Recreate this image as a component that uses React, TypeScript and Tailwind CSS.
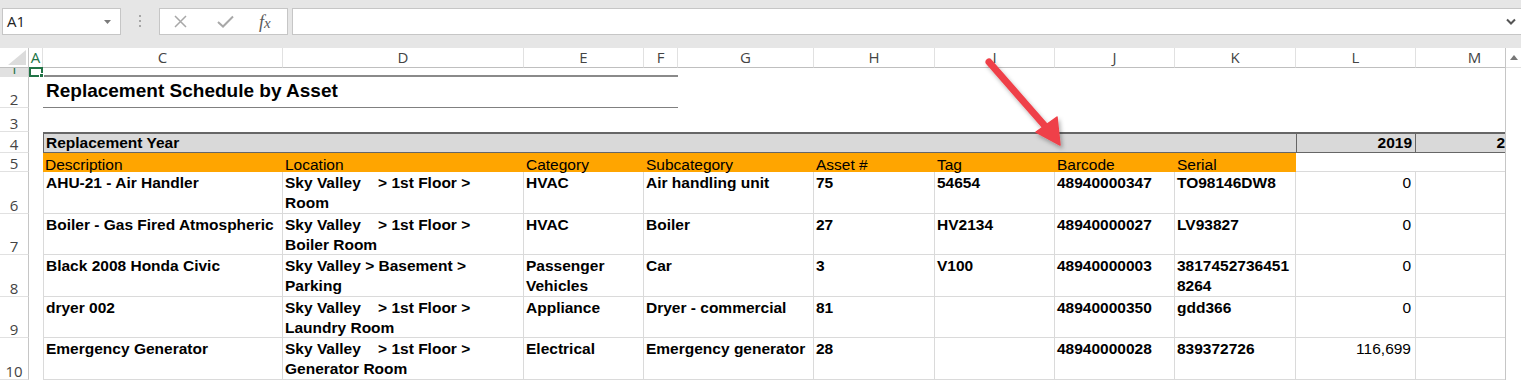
import React from "react";

type Row = {
  n: number;
  desc: string;
  loc: string[];
  cat: string[];
  sub: string;
  asset: string;
  tag: string;
  bar: string;
  serial: string[];
  l: string;
};

const rows: Row[] = [
  { n: 6, desc: "AHU-21 - Air Handler", loc: ["Sky Valley    > 1st Floor >", "Room"], cat: ["HVAC"], sub: "Air handling unit", asset: "75", tag: "54654", bar: "48940000347", serial: ["TO98146DW8"], l: "0" },
  { n: 7, desc: "Boiler - Gas Fired Atmospheric", loc: ["Sky Valley    > 1st Floor >", "Boiler Room"], cat: ["HVAC"], sub: "Boiler", asset: "27", tag: "HV2134", bar: "48940000027", serial: ["LV93827"], l: "0" },
  { n: 8, desc: "Black 2008 Honda Civic", loc: ["Sky Valley > Basement >", "Parking"], cat: ["Passenger", "Vehicles"], sub: "Car", asset: "3", tag: "V100", bar: "48940000003", serial: ["3817452736451", "8264"], l: "0" },
  { n: 9, desc: "dryer 002", loc: ["Sky Valley    > 1st Floor >", "Laundry Room"], cat: ["Appliance"], sub: "Dryer - commercial", asset: "81", tag: "", bar: "48940000350", serial: ["gdd366"], l: "0" },
  { n: 10, desc: "Emergency Generator", loc: ["Sky Valley    > 1st Floor >", "Generator Room"], cat: ["Electrical"], sub: "Emergency generator", asset: "28", tag: "", bar: "48940000028", serial: ["839372726"], l: "116,699" },
];

const letters = ["A", "C", "D", "E", "F", "G", "H", "I", "J", "K", "L", "M"];

function RowHead({ n, sel }: { n: number; sel?: boolean }) {
  return (
    <div
      className={`flex items-end justify-center overflow-hidden border-r border-b border-r-[#c6c6c6] border-b-[#e1e1e1] font-['Open_Sans'] text-[15px] leading-none ${
        sel ? "bg-[#e1e1e1] text-[#217346]" : "bg-white text-[#444]"
      }`}
    >
      <span>{n}</span>
    </div>
  );
}

function Lines({ lines }: { lines: string[] }) {
  return (
    <>
      {lines.map((t, i) => (
        <div key={i} className="whitespace-pre">
          {t}
        </div>
      ))}
    </>
  );
}

const dataCell = "border-r border-b border-[#dadada] px-[2px] pt-[1px] leading-[20px] font-bold whitespace-pre overflow-hidden";
const hdrCell = "bg-[#ffa500] px-[2px] pt-[3px] leading-[17px] whitespace-pre";

export default function App() {
  return (
    <div className="relative w-[1521px] h-[380px] overflow-hidden bg-white text-black font-['Liberation_Sans',Arial,sans-serif]">
      {/* Formula bar */}
      <div className="h-[48px] bg-[#e6e6e6] flex items-start pt-[8px] pl-[2px]">
        <div className="w-[119px] h-[27px] bg-white border border-[#c6c6c6] flex items-center justify-between pl-[4px] pr-[9px]">
          <span className="font-['Open_Sans'] text-[15px] text-[#222] leading-none">A1</span>
          <svg width="7" height="4" viewBox="0 0 7 4">
            <path d="M0 0 L7 0 L3.5 4 Z" fill="#7a7a7a" />
          </svg>
        </div>
        <div className="w-[38px] h-[27px] flex flex-col items-center pt-[7px] gap-[3px]">
          <div className="w-[2px] h-[2px] bg-[#a6a6a6]" />
          <div className="w-[2px] h-[2px] bg-[#a6a6a6]" />
          <div className="w-[2px] h-[2px] bg-[#a6a6a6]" />
        </div>
        <div className="w-[129px] h-[27px] bg-white border border-[#c6c6c6] flex items-center pl-[14px]">
          <svg width="13" height="13" viewBox="0 0 13 13">
            <path d="M1 1 L12 12 M12 1 L1 12" stroke="#a8a8a8" strokeWidth="1.5" fill="none" />
          </svg>
          <svg width="17" height="13" viewBox="0 0 17 13" className="ml-[30px]">
            <path d="M1 7 L6 11.5 L16 1.5" stroke="#a8a8a8" strokeWidth="2" fill="none" />
          </svg>
          <span className="ml-[25px] font-['Liberation_Serif',serif] italic text-[18px] leading-none text-[#5a5a5a]">
            f<span className="text-[15px]">x</span>
          </span>
        </div>
        <div className="ml-[4px] flex-1 h-[27px] bg-white border-y border-l border-[#c6c6c6] flex items-center justify-end pr-[5px]">
          <svg width="10" height="7" viewBox="0 0 10 7">
            <path d="M1 1.5 L5 5.5 L9 1.5" stroke="#555" strokeWidth="2" fill="none" />
          </svg>
        </div>
      </div>

      {/* Sheet */}
      <div className="flex h-[332px]">
        <div className="relative w-[1505px] overflow-hidden">
          <div className="grid w-[1534px] grid-cols-[29px_14px_240px_241px_120px_34px_136px_121px_120px_120px_121px_120px_118px] grid-rows-[20px_9px_31px_24px_21px_19px_42px_41px_42px_41px_42px] text-[15.5px]">
            {/* column headers */}
            <div className="border-b border-r border-b-[#bfbfbf] border-r-[#c6c6c6] bg-white">
              <svg width="28" height="19" viewBox="0 0 28 19">
                <path d="M8 17 L26 2 L26 17 Z" fill="#dcdcdc" />
              </svg>
            </div>
            {letters.map((l) => (
              <div
                key={l}
                className={`flex items-center justify-center border-b border-r border-b-[#bfbfbf] border-r-[#e1e1e1] bg-white font-['Open_Sans'] text-[15px] leading-none ${
                  l === "A" ? "text-[#217346]" : "text-[#444]"
                }`}
              >
                {l}
              </div>
            ))}

            {/* row 1 */}
            <RowHead n={1} sel />
            <div />
            <div className="col-span-4 border-b-2 border-[#8a8a8a]" />
            <div className="col-span-7" />

            {/* row 2 */}
            <RowHead n={2} />
            <div />
            <div className="col-span-4 border-b border-[#808080] pl-[3px] pt-[4px] text-[19px] leading-[20px] font-bold whitespace-pre">
              Replacement Schedule by Asset
            </div>
            <div className="col-span-7" />

            {/* row 3 */}
            <RowHead n={3} />
            <div className="col-span-12" />

            {/* row 4 */}
            <RowHead n={4} />
            <div />
            <div className="col-span-9 bg-[#d9d9d9] border-t-2 border-b border-l border-[#666] px-[2px] leading-[17px] font-bold">
              Replacement Year
            </div>
            <div className="bg-[#d9d9d9] border-t-2 border-b border-l border-r border-[#666] pr-[3px] leading-[17px] font-bold text-right">
              2019
            </div>
            <div className="bg-[#d9d9d9] border-t-2 border-b border-[#666] pr-[3px] leading-[17px] font-bold text-right">
              2020
            </div>

            {/* row 5 */}
            <RowHead n={5} />
            <div />
            <div className={hdrCell}>Description</div>
            <div className={hdrCell}>Location</div>
            <div className={hdrCell}>Category</div>
            <div className={`col-span-2 ${hdrCell}`}>Subcategory</div>
            <div className={hdrCell}>Asset #</div>
            <div className={hdrCell}>Tag</div>
            <div className={hdrCell}>Barcode</div>
            <div className={hdrCell}>Serial</div>
            <div className="border-b border-[#dadada]" />
            <div className="border-b border-[#dadada]" />

            {/* data rows */}
            {rows.map((r) => (
              <React.Fragment key={r.n}>
                <RowHead n={r.n} />
                <div />
                <div className={`border-l ${dataCell}`}>{r.desc}</div>
                <div className={dataCell}>
                  <Lines lines={r.loc} />
                </div>
                <div className={dataCell}>
                  <Lines lines={r.cat} />
                </div>
                <div className={`col-span-2 ${dataCell}`}>{r.sub}</div>
                <div className={dataCell}>{r.asset}</div>
                <div className={dataCell}>{r.tag}</div>
                <div className={dataCell}>{r.bar}</div>
                <div className={dataCell}>
                  <Lines lines={r.serial} />
                </div>
                <div className="border-r border-b border-[#dadada] pr-[4px] pt-[1px] leading-[20px] text-right">{r.l}</div>
                <div className="border-b border-[#dadada]" />
              </React.Fragment>
            ))}
          </div>

          {/* active cell selection */}
          <div className="absolute left-[29px] top-[19px] w-[14px] h-[10px] border-2 border-[#217346]">
            <div className="absolute right-[-3px] bottom-[-3px] w-[5px] h-[5px] bg-[#217346] border border-white" />
          </div>
        </div>

        {/* vertical scrollbar */}
        <div className="w-[16px] border-l border-[#c6c6c6] bg-white flex flex-col">
          <div className="h-[20px] flex items-center justify-center border-b border-[#e1e1e1]">
            <svg width="8" height="5" viewBox="0 0 8 5">
              <path d="M0 5 L4 0 L8 5 Z" fill="#777" />
            </svg>
          </div>
          <div className="flex-1 bg-white" />
        </div>
      </div>

      {/* annotation arrow */}
      <svg className="absolute left-0 top-0 pointer-events-none" width="1521" height="380" viewBox="0 0 1521 380">
        <defs>
          <filter id="arrowShadow" x="-50%" y="-50%" width="200%" height="200%">
            <feDropShadow dx="2" dy="3" stdDeviation="2" floodColor="#000" floodOpacity="0.3" />
          </filter>
        </defs>
        <g filter="url(#arrowShadow)">
          <line x1="989" y1="62" x2="1045" y2="126" stroke="#ef4149" strokeWidth="7" strokeLinecap="round" />
          <path d="M1060 145 L1036 132 L1057 117 Z" fill="#ef4149" stroke="#ef4149" strokeWidth="1.5" strokeLinejoin="round" />
        </g>
      </svg>
    </div>
  );
}
